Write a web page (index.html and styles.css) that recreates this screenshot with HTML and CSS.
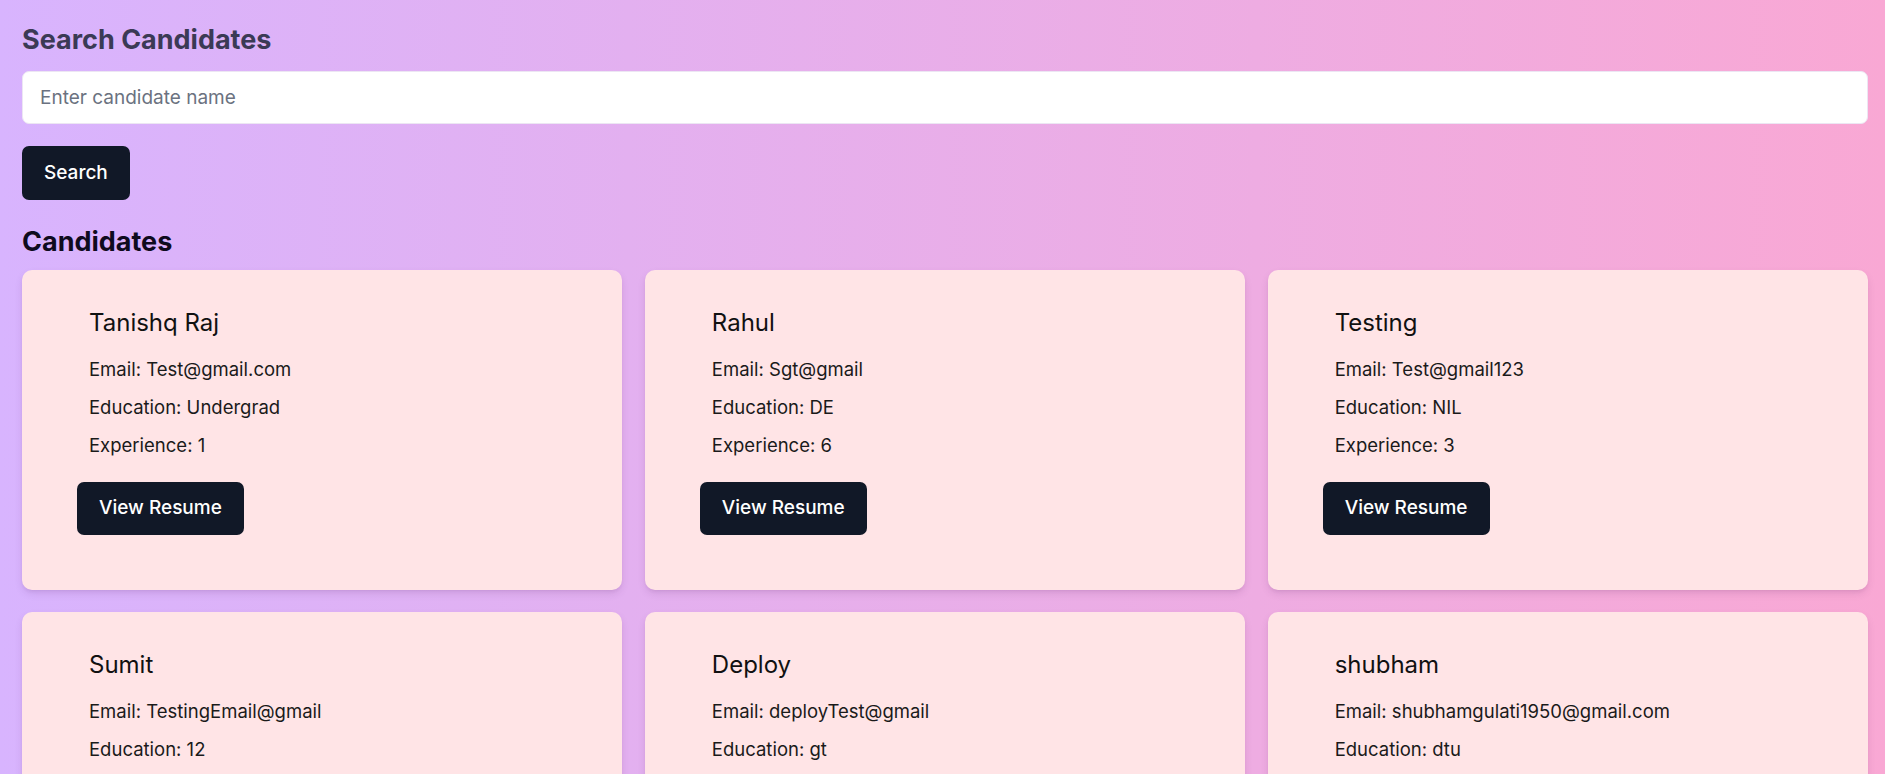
FILE: index.html
```html
<!DOCTYPE html>
<html lang="en">
<head>
<meta charset="utf-8">
<title>Search Candidates</title>
<link rel="stylesheet" href="styles.css">
</head>
<body>
<main class="page">
  <h2 class="search-title">Search Candidates</h2>
  <input class="search-input" type="text" placeholder="Enter candidate name">
  <button class="btn search-btn" type="button">Search</button>
  <h2 class="list-title">Candidates</h2>
  <section class="grid">
    <article class="card">
      <div class="card-body">
        <h3 class="name">Tanishq Raj</h3>
        <p class="info">Email: Test@gmail.com</p>
        <p class="info">Education: Undergrad</p>
        <p class="info">Experience: 1</p>
      </div>
      <button class="btn resume-btn" type="button">View Resume</button>
    </article>
    <article class="card">
      <div class="card-body">
        <h3 class="name">Rahul</h3>
        <p class="info">Email: Sgt@gmail</p>
        <p class="info">Education: DE</p>
        <p class="info">Experience: 6</p>
      </div>
      <button class="btn resume-btn" type="button">View Resume</button>
    </article>
    <article class="card">
      <div class="card-body">
        <h3 class="name">Testing</h3>
        <p class="info">Email: Test@gmail123</p>
        <p class="info">Education: NIL</p>
        <p class="info">Experience: 3</p>
      </div>
      <button class="btn resume-btn" type="button">View Resume</button>
    </article>
    <article class="card">
      <div class="card-body">
        <h3 class="name">Sumit</h3>
        <p class="info">Email: TestingEmail@gmail</p>
        <p class="info">Education: 12</p>
        <p class="info">Experience: 2</p>
      </div>
      <button class="btn resume-btn" type="button">View Resume</button>
    </article>
    <article class="card">
      <div class="card-body">
        <h3 class="name">Deploy</h3>
        <p class="info">Email: deployTest@gmail</p>
        <p class="info">Education: gt</p>
        <p class="info">Experience: 1</p>
      </div>
      <button class="btn resume-btn" type="button">View Resume</button>
    </article>
    <article class="card">
      <div class="card-body">
        <h3 class="name">shubham</h3>
        <p class="info">Email: shubhamgulati1950@gmail.com</p>
        <p class="info">Education: dtu</p>
        <p class="info">Experience: 0</p>
      </div>
      <button class="btn resume-btn" type="button">View Resume</button>
    </article>
  </section>
</main>
</body>
</html>
```

FILE: styles.css
```css
html, body {
  margin: 0;
  padding: 0;
}

body {
  font-family: Inter, "Noto Sans", "Liberation Sans", sans-serif;
  background: linear-gradient(to right, #d8b4fe, #f9a8d4);
  min-height: 100vh;
  color: #111111;
}

.page {
  display: flex;
  flex-direction: column;
  align-items: flex-start;
  padding: 24px 17px 40px 22px;
}

.search-title {
  margin: 0 0 15px 0;
  font-size: 27px;
  line-height: 32px;
  font-weight: 700;
  color: #3b3a55;
}

.search-input {
  box-sizing: border-box;
  width: 100%;
  height: 53px;
  margin: 0;
  padding: 0 17px;
  border: 1px solid #ece6f3;
  border-radius: 7px;
  background: #ffffff;
  font-family: inherit;
  font-size: 19px;
  color: #111827;
  outline: none;
}

.search-input::placeholder {
  color: #6b7280;
}

.btn {
  font-family: inherit;
  border: none;
  background: #111827;
  color: #ffffff;
  font-size: 19px;
  line-height: 28px;
  font-weight: 500;
  border-radius: 7px;
  cursor: pointer;
}

.search-btn {
  margin-top: 22px;
  padding: 13px 22px;
}

.list-title {
  margin: 25.5px 0 12.8px 0;
  font-size: 27px;
  line-height: 32px;
  font-weight: 700;
  color: #0f0b1e;
}

.grid {
  width: 100%;
  display: grid;
  grid-template-columns: repeat(3, 1fr);
  gap: 22.5px;
}

.card {
  background: #ffe4e6;
  border-radius: 10px;
  padding: 37px 55px 55px 55px;
  box-shadow: 0 4px 8px -1px rgba(80, 30, 90, 0.14), 0 2px 4px -2px rgba(80, 30, 90, 0.12);
}

.card-body {
  padding-left: 12px;
}

.name {
  margin: 0 0 15.5px 0;
  font-size: 24px;
  line-height: 32px;
  font-weight: 400;
  color: #111111;
}

.info {
  margin: 0 0 10px 0;
  font-size: 18.5px;
  line-height: 28px;
  color: #1a1a1a;
}

.info:last-child {
  margin-bottom: 0;
}

.resume-btn {
  margin-top: 23px;
  padding: 12.5px 22px;
  font-weight: 500;
}
```
